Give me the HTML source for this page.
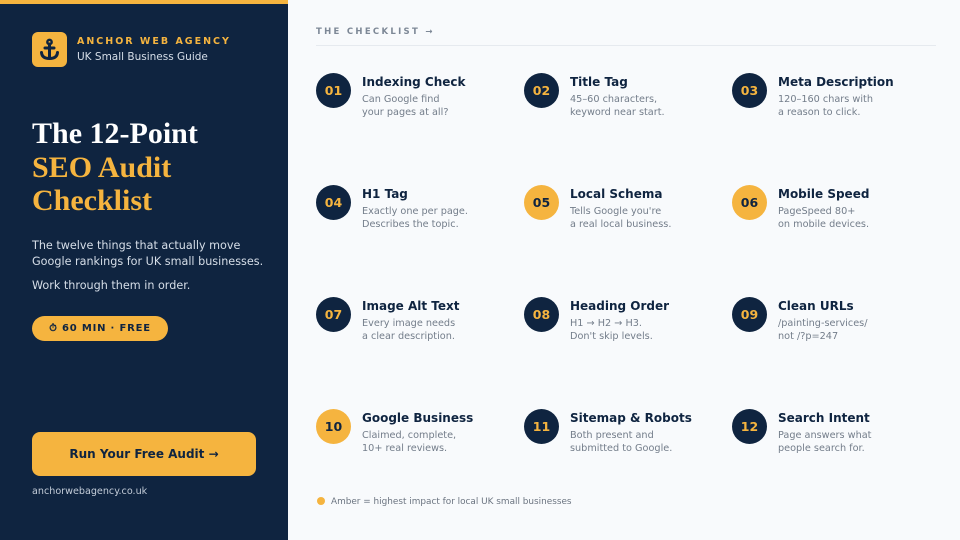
<!DOCTYPE html>
<html><head><meta charset="utf-8"><style>
*{margin:0;padding:0;box-sizing:border-box}
body{width:960px;height:540px;position:relative;overflow:hidden;background:#f8fafc;font-family:"DejaVu Sans","Liberation Sans",sans-serif}
.side{position:absolute;left:0;top:0;width:288px;height:540px;background:#0f2440}
.bar{position:absolute;left:0;top:0;width:288px;height:4px;background:#f5b43f}
.logo{position:absolute;left:32px;top:32px;width:35px;height:35px;border-radius:6px;background:#f5b43f}
.ag{position:absolute;left:77px;top:36px;font-size:9.5px;font-weight:bold;letter-spacing:2px;color:#f5b43f}
.sub{position:absolute;left:77px;top:51px;font-size:10.5px;color:#d6dee8}
h1{position:absolute;left:32px;top:117px;font-family:"Liberation Serif",serif;font-weight:bold;font-size:30px;line-height:33.5px;color:#fff}
h1 span{color:#f5b43f}
.p{position:absolute;left:32px;font-size:11.2px;line-height:16px;color:#d6dee8}
.pill{position:absolute;left:32px;top:316px;width:136px;height:25px;border-radius:13px;background:#f5b43f;color:#0f2440;font-size:10px;font-weight:bold;letter-spacing:.8px;text-align:center;line-height:25px}
.btn{position:absolute;left:32px;top:432px;width:224px;height:44px;border-radius:8px;background:#f5b43f;color:#0f2440;font-size:12px;font-weight:bold;text-align:center;line-height:44px}
.url{position:absolute;left:32px;top:486px;font-size:9.6px;color:#c3ccd8}
.hd{position:absolute;left:316px;top:27px;font-size:8.5px;font-weight:bold;letter-spacing:2.3px;color:#7d8896}
.line{position:absolute;left:316px;top:45px;width:620px;height:1px;background:#e6eaef}
.it{position:absolute;width:200px;height:60px}
.c{position:absolute;left:0;top:0;width:35px;height:35px;border-radius:50%;background:#0f2440;color:#f5b43f;font-size:12.5px;font-weight:bold;text-align:center;line-height:35px}
.c.a{background:#f5b43f;color:#0f2440}
.t{position:absolute;left:46px;top:2px;font-size:12px;font-weight:bold;color:#0f2440;white-space:nowrap}
.d{position:absolute;left:46px;top:20px;font-size:9.7px;line-height:13px;color:#737d8a;white-space:nowrap}
.leg{position:absolute;left:317px;top:497px;font-size:8.9px;color:#6b7480}
.leg i{display:inline-block;width:8px;height:8px;border-radius:50%;background:#f5b43f;margin-right:6px;vertical-align:-1px}
</style></head><body>
<div class="side"></div><div class="bar"></div>
<div class="logo"><svg width="35" height="35" viewBox="0 0 35 35"><g fill="none" stroke="#0f2440" stroke-width="3" stroke-linecap="round"><circle cx="17.5" cy="10" r="2.2" stroke-width="2.4"/><line x1="17.5" y1="12" x2="17.5" y2="26"/><line x1="13" y1="16" x2="22" y2="16"/><path d="M9.5 20.5 Q10 26.5 17.5 26.5 Q25 26.5 25.5 20.5"/></g></svg></div>
<div class="ag">ANCHOR WEB AGENCY</div>
<div class="sub">UK Small Business Guide</div>
<h1>The 12-Point<br><span>SEO Audit<br>Checklist</span></h1>
<div class="p" style="top:238px">The twelve things that actually move<br>Google rankings for UK small businesses.</div>
<div class="p" style="top:278px">Work through them in order.</div>
<div class="pill">⏱ 60 MIN · FREE</div>
<div class="btn">Run Your Free Audit →</div>
<div class="url">anchorwebagency.co.uk</div>
<div class="hd">THE CHECKLIST →</div>
<div class="line"></div>

<div class="it" style="left:316px;top:73px"><div class="c">01</div><div class="t">Indexing Check</div><div class="d">Can Google find<br>your pages at all?</div></div>
<div class="it" style="left:524px;top:73px"><div class="c">02</div><div class="t">Title Tag</div><div class="d">45–60 characters,<br>keyword near start.</div></div>
<div class="it" style="left:732px;top:73px"><div class="c">03</div><div class="t">Meta Description</div><div class="d">120–160 chars with<br>a reason to click.</div></div>

<div class="it" style="left:316px;top:185px"><div class="c">04</div><div class="t">H1 Tag</div><div class="d">Exactly one per page.<br>Describes the topic.</div></div>
<div class="it" style="left:524px;top:185px"><div class="c a">05</div><div class="t">Local Schema</div><div class="d">Tells Google you're<br>a real local business.</div></div>
<div class="it" style="left:732px;top:185px"><div class="c a">06</div><div class="t">Mobile Speed</div><div class="d">PageSpeed 80+<br>on mobile devices.</div></div>

<div class="it" style="left:316px;top:297px"><div class="c">07</div><div class="t">Image Alt Text</div><div class="d">Every image needs<br>a clear description.</div></div>
<div class="it" style="left:524px;top:297px"><div class="c">08</div><div class="t">Heading Order</div><div class="d">H1 → H2 → H3.<br>Don't skip levels.</div></div>
<div class="it" style="left:732px;top:297px"><div class="c">09</div><div class="t">Clean URLs</div><div class="d">/painting-services/<br>not /?p=247</div></div>

<div class="it" style="left:316px;top:409px"><div class="c a">10</div><div class="t">Google Business</div><div class="d">Claimed, complete,<br>10+ real reviews.</div></div>
<div class="it" style="left:524px;top:409px"><div class="c">11</div><div class="t">Sitemap &amp; Robots</div><div class="d">Both present and<br>submitted to Google.</div></div>
<div class="it" style="left:732px;top:409px"><div class="c">12</div><div class="t">Search Intent</div><div class="d">Page answers what<br>people search for.</div></div>

<div class="leg"><i></i>Amber = highest impact for local UK small businesses</div>
</body></html>
